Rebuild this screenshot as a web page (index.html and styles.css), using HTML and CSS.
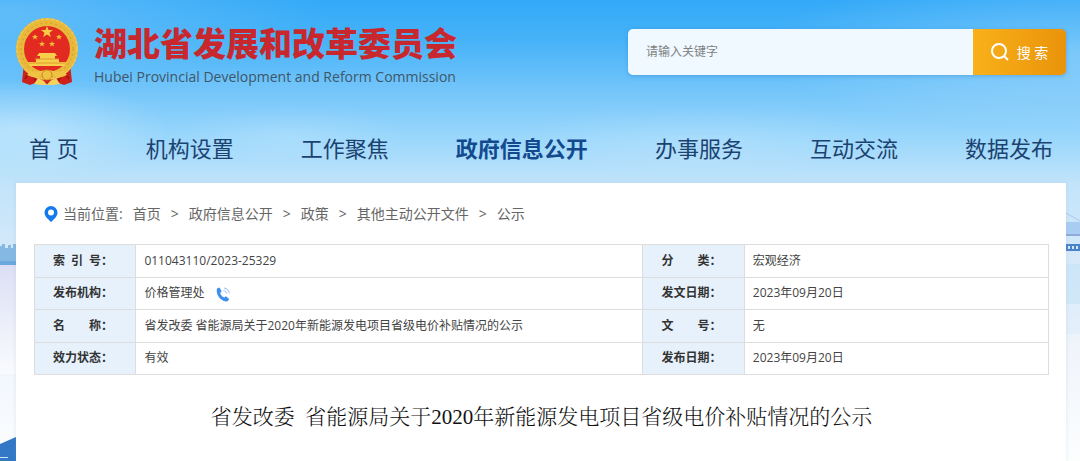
FILE: index.html
```
<!DOCTYPE html>
<html lang="zh-CN">
<head>
  <meta charset="UTF-8" />
  <meta name="viewport" content="width=device-width, initial-scale=1.0" />
  <title>湖北省发展和改革委员会</title>
  <link rel="stylesheet" href="styles.css">
</head>
<body>

<!-- Sky, river and skyline behind the page -->
<svg class="scene" viewBox="0 0 1080 461" preserveAspectRatio="none" aria-hidden="true">
  <defs>
    <linearGradient id="sky" x1="0" y1="0" x2="0" y2="1">
      <stop offset="0" stop-color="#33a9f8"/>
      <stop offset="0.09" stop-color="#47b3f8"/>
      <stop offset="0.2" stop-color="#75c6fa"/>
      <stop offset="0.3" stop-color="#9ad7fc"/>
      <stop offset="0.4" stop-color="#c2e4fa"/>
      <stop offset="0.56" stop-color="#d6e9f9"/>
      <stop offset="0.75" stop-color="#f0f4fb"/>
      <stop offset="1" stop-color="#fcfefe"/>
    </linearGradient>
    <radialGradient id="cloud">
      <stop offset="0" stop-color="#fff" stop-opacity="0.5"/>
      <stop offset="1" stop-color="#fff" stop-opacity="0"/>
    </radialGradient>
    <linearGradient id="dusk" x1="0" y1="0" x2="0" y2="1">
      <stop offset="0" stop-color="#dcdff4"/>
      <stop offset="1" stop-color="#fafbfe"/>
    </linearGradient>
  </defs>
  <rect width="1080" height="461" fill="url(#sky)"/>
  <ellipse cx="20" cy="130" rx="150" ry="50" fill="url(#cloud)" opacity="0.7"/>
  <ellipse cx="0" cy="10" rx="330" ry="70" fill="url(#cloud)" opacity="0.4"/>
  <ellipse cx="1080" cy="50" rx="320" ry="80" fill="url(#cloud)" opacity="0.5"/>
  <ellipse cx="290" cy="135" rx="120" ry="30" fill="url(#cloud)" opacity="0.3"/>
  <ellipse cx="700" cy="140" rx="200" ry="35" fill="url(#cloud)" opacity="0.3"/>
  <!-- left bank -->
  <rect y="264" width="16" height="110" fill="url(#dusk)"/>
  <path d="M0 262V246h2v-2h3v4h3v-3h3v3h2v-4h3v18z" fill="#86b8e4"/>
  <rect y="261" width="16" height="4" fill="#6ba8de"/>
  <path d="M0 444l16-7v24H0z" fill="#3278c6"/>
  <rect y="457" width="8" height="1" fill="#cfe2f6"/>
  <!-- bridge on the right bank -->
  <path d="M1066 213l14 8" stroke="#a9c7ec" fill="none"/>
  <rect x="1066" y="222" width="14" height="12" fill="#a9cdf2"/>
  <rect x="1066" y="234" width="14" height="2" fill="#8fa9dd"/>
  <path d="M1066 245h14M1066 250h14" stroke="#4a83cc" stroke-width="2"/>
  <path d="M1066 248h14" stroke="#4a83cc" stroke-width="4" stroke-dasharray="2 2"/>
  <rect x="1066" y="264" width="14" height="40" fill="#c5e2f7" opacity="0.6"/>
  <rect x="1066" y="304" width="14" height="30" fill="#dcecf9" opacity="0.5"/>
</svg>

<header class="header">
  <a class="logo" href="#">
    <svg class="emblem" viewBox="0 0 64 68" aria-hidden="true">
      <path d="M9 45L7 64l8 3 8-3 9 2 9-2 8 3 8-3-2-19z" fill="#d0201c"/>
      <path d="M10 61l6-9 5 12M54 61l-6-9-5 12" fill="none" stroke="#a91313" stroke-width="2"/>
      <circle cx="32" cy="31" r="27" fill="#e32a20" stroke="#e9b93c" stroke-width="8"/>
      <circle cx="32" cy="31" r="30" fill="none" stroke="#f6d468" stroke-width="1" stroke-dasharray="3 2"/>
      <circle cx="32" cy="31" r="26" fill="none" stroke="#d39a28" stroke-width="1" stroke-dasharray="2 3"/>
      <path d="M32 8l1.5 4H38l-3.500 2.700 1.400 4.300-3.900-2.600-3.900 2.600 1.400-4.300L26 12h4.500z" fill="#f7cd45"/>
      <g fill="#f3bd3a">
        <path d="M20 16l.8 2h2.200l-1.700 1.400.7 2.100-2-1.300-2 1.300.7-2.100-1.700-1.400h2.200z"/>
        <path d="M44 16l.8 2h2.200l-1.700 1.400.7 2.100-2-1.300-2 1.300.7-2.100-1.700-1.400h2.200z"/>
        <path d="M27 23l.8 2h2.200l-1.700 1.400.7 2.100-2-1.300-2 1.300.7-2.100-1.700-1.400h2.200z"/>
        <path d="M37 23l.8 2h2.200l-1.700 1.400.7 2.100-2-1.300-2 1.300.7-2.100-1.700-1.400h2.200z"/>
      </g>
      <path d="M24 35h16l2 3h-2v3h4v3h7l-2 4H15l-2-4h8v-3h4v-3h-3z" fill="#f7cf4c"/>
      <path d="M20 41h24M14 45h36" stroke="#dd9c2b" stroke-width="1"/>
      <path d="M16 52c5 4 9 0 16 0s11 4 16 0l4 5c-6 3-9 3-12 1l-8-4-8 4c-3 2-6 2-12-1z" fill="#f0c243"/>
      <circle cx="32" cy="57" r="5" fill="#f0c243" stroke="#c98a20"/>
      <path d="M19 66l4-6 6 3 3 4 3-4 6-3 4 6-7 1H26z" fill="#f4d35d"/>
    </svg>
    <span class="logo-text">
      <strong>湖北省发展和改革委员会</strong>
      <small>Hubei Provincial Development and Reform Commission</small>
    </span>
  </a>

  <form class="search">
    <input type="text" placeholder="请输入关键字" aria-label="请输入关键字">
    <button type="button">
      <svg viewBox="0 0 18 18" aria-hidden="true">
        <circle cx="8" cy="8" r="7"/>
        <path d="M13 13l4 4"/>
      </svg>
      搜 索
    </button>
  </form>
</header>

<nav class="nav">
  <a href="#">首 页</a>
  <a href="#">机构设置</a>
  <a href="#">工作聚焦</a>
  <a href="#" class="active">政府信息公开</a>
  <a href="#">办事服务</a>
  <a href="#">互动交流</a>
  <a href="#">数据发布</a>
</nav>

<main class="content">
  <div class="breadcrumb">
    <svg viewBox="0 0 14 16" aria-hidden="true">
      <path d="M7 0a6.500 6.500 0 0 0-6.500 6.500C.5 10.500 4 13 7 16c3-3 6.500-5.500 6.500-9.500A6.500 6.500 0 0 0 7 0zm0 3.500a3 3 0 1 1 0 6 3 3 0 0 1 0-6z"/>
    </svg>
    <span>当前位置:</span>
    <a href="#">首页</a>
    <span>&gt;</span>
    <a href="#">政府信息公开</a>
    <span>&gt;</span>
    <a href="#">政策</a>
    <span>&gt;</span>
    <a href="#">其他主动公开文件</a>
    <span>&gt;</span>
    <a href="#">公示</a>
  </div>

  <table class="info">
    <colgroup>
      <col class="col-name">
      <col class="col-wide">
      <col class="col-name">
      <col class="col-value">
    </colgroup>
    <tr>
      <th scope="row"><div><span>索</span><span>引</span><span>号：</span></div></th>
      <td>011043110/2023-25329</td>
      <th scope="row"><div><span>分</span><span>类：</span></div></th>
      <td>宏观经济</td>
    </tr>
    <tr>
      <th scope="row"><div>发布机构：</div></th>
      <td>
        价格管理处
        <svg class="phone" viewBox="0 0 14 15" aria-hidden="true">
          <path d="M1 1.500L3.500.5l2.200 3.700-1.500 1.700c.6 2 2 3.700 4 4.600l1.700-1.200 3.300 2.600-1.500 2.400C6 15.500-.8 8.500 1 1.500z" fill="#3f8ff0"/>
          <path d="M7.500 3.500c1.700.2 2.800 1.300 3 3M8 1c2.900.3 5 2.400 5.300 5.300" fill="none" stroke="#8dbcf6"/>
        </svg>
      </td>
      <th scope="row"><div>发文日期：</div></th>
      <td>2023年09月20日</td>
    </tr>
    <tr>
      <th scope="row"><div><span>名</span><span>称：</span></div></th>
      <td>省发改委 省能源局关于2020年新能源发电项目省级电价补贴情况的公示</td>
      <th scope="row"><div><span>文</span><span>号：</span></div></th>
      <td>无</td>
    </tr>
    <tr>
      <th scope="row"><div>效力状态：</div></th>
      <td>有效</td>
      <th scope="row"><div>发布日期：</div></th>
      <td>2023年09月20日</td>
    </tr>
  </table>

  <h1>省发改委&nbsp; 省能源局关于2020年新能源发电项目省级电价补贴情况的公示</h1>
</main>

</body>
</html>
```
FILE: styles.css
```
* {
  box-sizing: border-box;
}

body {
  margin: 0;
  min-height: 100vh;
  display: flex;
  flex-direction: column;
  position: relative;
  background: #fcfefe;
  font-family: "Open Sans", "Noto Sans CJK SC", sans-serif;
  font-size: 12px;
  color: #444;
}

a {
  color: inherit;
  text-decoration: none;
}

.scene {
  position: absolute;
  top: 0;
  left: 0;
  width: 100%;
  height: 100%;
  z-index: -1;
}

/* Header */
.header {
  display: flex;
  justify-content: space-between;
  align-items: center;
  height: 103px;
  padding: 0 14px 0 15px;
}

.logo {
  display: flex;
  align-items: center;
  gap: 15px;
}

.emblem {
  width: 64px;
  height: 68px;
}

.logo-text {
  display: flex;
  flex-direction: column;
  padding-top: 12px;
}

.logo-text strong {
  font-size: 33px;
  line-height: 38px;
  font-weight: 900;
  color: #c8282d;
}

.logo-text small {
  font-size: 14px;
  line-height: 28px;
  color: #3f5668;
}

.search {
  display: flex;
  width: 438px;
  height: 46px;
  border-radius: 5px;
  overflow: hidden;
  box-shadow: 0 1px 4px rgba(40, 120, 190, 0.4);
}

.search input {
  flex: 1;
  min-width: 0;
  padding: 0 18px;
  border: none;
  background: #eff9ff;
  font-family: inherit;
  font-size: 12px;
}

.search input::placeholder {
  color: #808080;
}

.search button {
  display: flex;
  align-items: center;
  justify-content: center;
  gap: 8px;
  width: 93px;
  padding: 0;
  border: none;
  background: linear-gradient(to right, #f8b11a, #ea930a);
  color: #fff;
  font-family: inherit;
  font-size: 14px;
  cursor: pointer;
}

.search button svg {
  width: 18px;
  height: 18px;
  fill: none;
  stroke: #fff;
  stroke-width: 2;
}

/* Menu */
.nav {
  display: flex;
  justify-content: space-between;
  align-items: center;
  height: 80px;
  padding: 8px 27px 0 29px;
  font-size: 22px;
  color: #1c4270;
}

.nav .active {
  font-weight: 700;
  color: #134a8e;
}

/* Content */
.content {
  flex: 1;
  margin: 0 14px 0 16px;
  padding: 19px 17px 24px 18px;
  background: #fff;
  box-shadow: 0 0 4px rgba(120, 160, 200, 0.2);
}

.breadcrumb {
  display: flex;
  align-items: center;
  gap: 10px;
  padding-left: 10px;
  margin-bottom: 18px;
  font-size: 14px;
  line-height: 24px;
  color: #666;
}

.breadcrumb svg {
  width: 14px;
  height: 16px;
  margin-right: -5px;
  fill: #1479ec;
}

.info {
  width: 100%;
  height: 131px;
  table-layout: fixed;
  border-collapse: collapse;
}

.col-name {
  width: 10%;
}

.col-wide {
  width: 50%;
}

.col-value {
  width: 30%;
}

.info th,
.info td {
  padding: 0 8px;
  border: 1px solid #ddd;
  text-align: left;
  line-height: 20px;
}

.info th {
  padding: 0 14px 0 18px;
  background: #e6f1fc;
  color: #333;
}

.info th div {
  display: flex;
  justify-content: space-between;
  width: 60px;
  white-space: nowrap;
}

.phone {
  width: 14px;
  height: 15px;
  margin-left: 8px;
  vertical-align: middle;
}

h1 {
  margin: 26px 0 0;
  text-align: center;
  font-family: "Liberation Serif", "Noto Serif CJK SC", "Noto Sans CJK SC", serif;
  font-size: 21px;
  line-height: 32px;
  font-weight: 300;
  color: #111;
}
```
